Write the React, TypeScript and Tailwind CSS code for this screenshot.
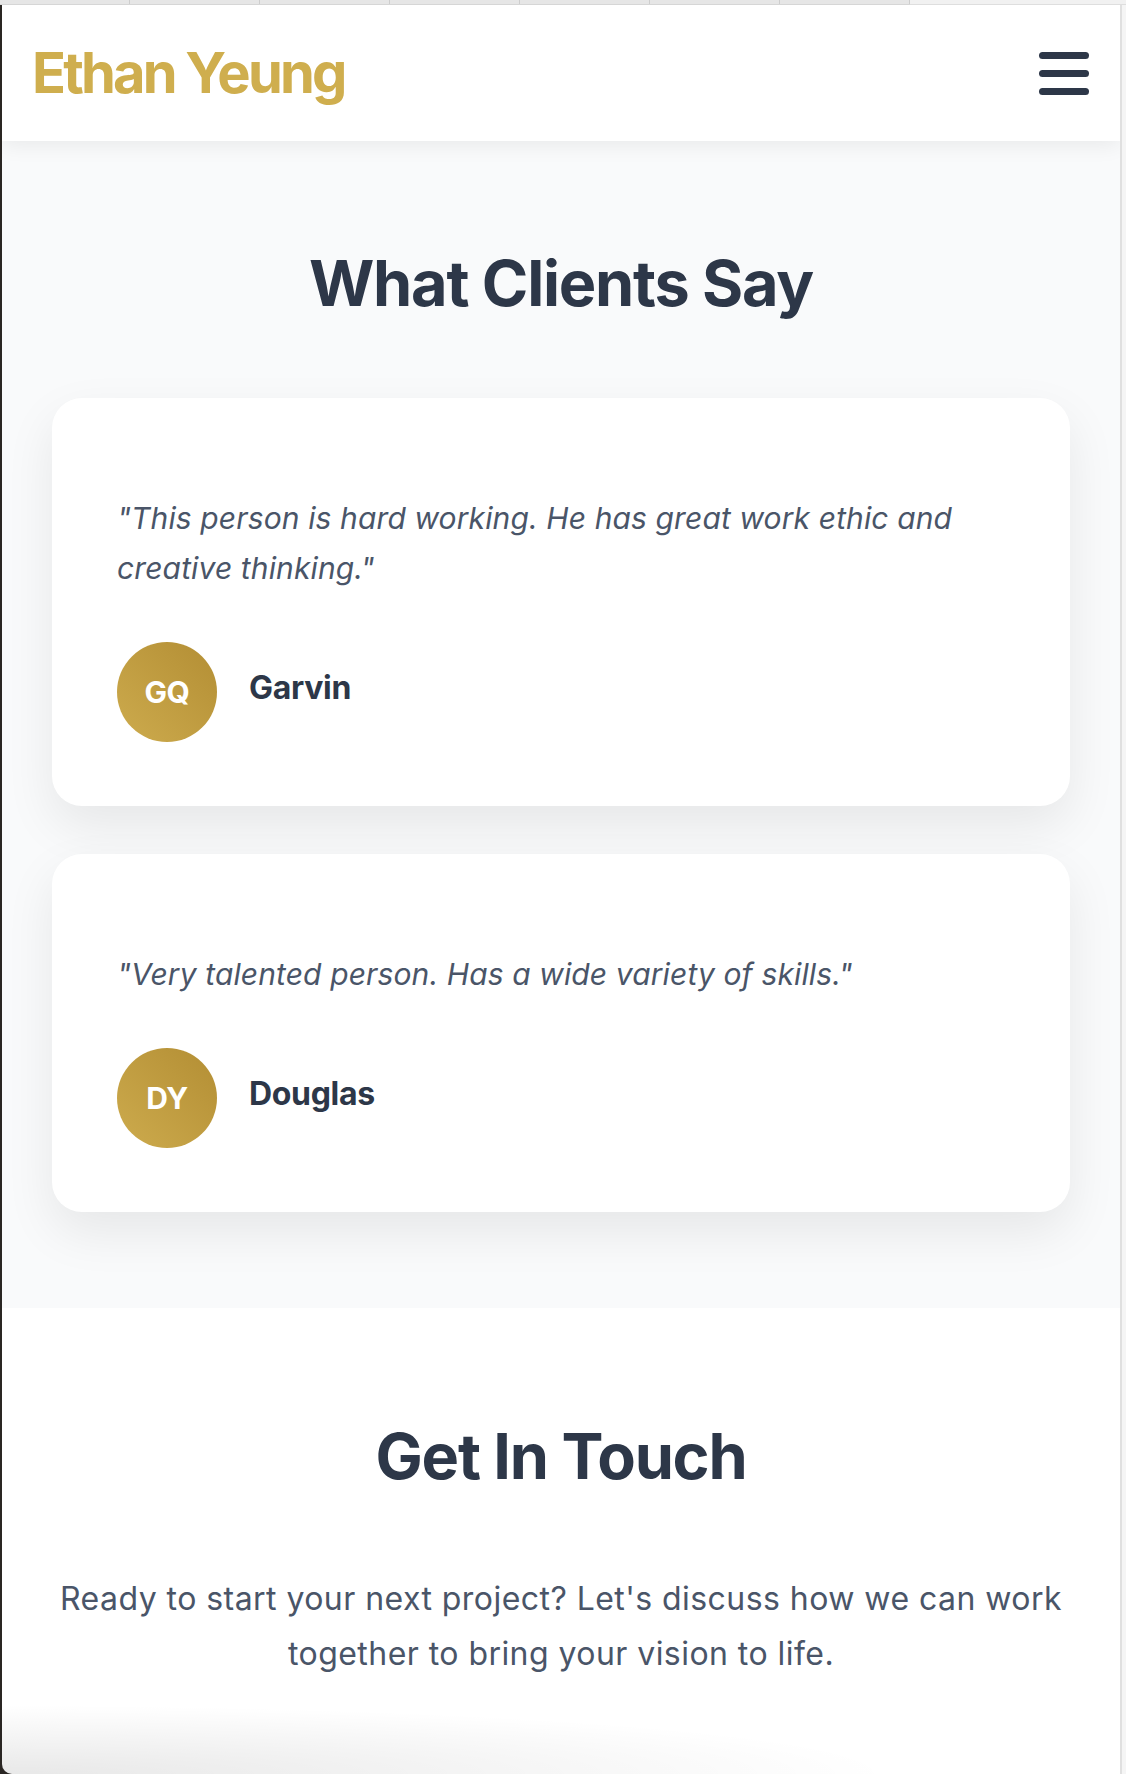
const testimonials = [
  {
    quote: "\"This person is hard working. He has great work ethic and creative thinking.\"",
    initials: "GQ",
    name: "Garvin",
  },
  {
    quote: "\"Very talented person. Has a wide variety of skills.\"",
    initials: "DY",
    name: "Douglas",
  },
];

// tab separators of the browser strip across the top
const tabStops = [130, 130, 130, 130, 130, 130, 130];

function TabStrip() {
  return (
    <div className="flex h-[5px] shrink-0">
      <div className="flex h-full border-b border-[#d6d6d6] bg-[#e6e6e6]">
        {tabStops.map((w, i) => (
          <div key={i} className="h-full border-r border-[#cdcdcd]" style={{ width: w }} />
        ))}
      </div>
      <div className="h-full flex-1 border-b border-[#dedede] bg-[#f1f1f1]" />
    </div>
  );
}

function Header() {
  return (
    <header className="relative z-10 flex h-[136px] shrink-0 items-center justify-between bg-white px-[30px] shadow-[0_4px_20px_rgba(0,0,0,0.07)]">
      <span className="text-[56px] font-bold leading-none tracking-[-0.05em] text-[#cfae4e]">
        Ethan Yeung
      </span>
      <button className="mr-[1px] flex w-[50px] flex-col gap-[11px]">
        <span className="h-[7px] rounded-full bg-[#2d3748]" />
        <span className="h-[7px] rounded-full bg-[#2d3748]" />
        <span className="h-[7px] rounded-full bg-[#2d3748]" />
      </button>
    </header>
  );
}

function TestimonialCard({ quote, initials, name }: { quote: string; initials: string; name: string }) {
  return (
    <div className="rounded-[30px] bg-white px-[65px] pt-[95px] pb-[64px] shadow-[0_20px_50px_rgba(0,0,0,0.08)]">
      <p className="text-[30px] italic leading-[50px] tracking-[0.004em] text-[#4a5568]">{quote}</p>
      <div className="mt-[49px] flex items-center gap-[32px]">
        <div className="flex h-[100px] w-[100px] items-center justify-center rounded-full bg-linear-to-bl from-[#b38e34] to-[#cdab4d]">
          <span className="text-[30px] font-bold tracking-[-0.01em] text-white">{initials}</span>
        </div>
        <span className="pb-2 text-[32px] font-bold tracking-[-0.01em] text-[#2d3748]">{name}</span>
      </div>
    </div>
  );
}

export default function App() {
  return (
    <div className="flex h-[1774px] w-[1126px] flex-col overflow-hidden bg-[#2a2623] font-['Inter',sans-serif]">
      <TabStrip />
      <div className="flex min-h-0 flex-1">
        <div className="w-[2px] shrink-0" />
        <div className="relative flex w-[1118px] flex-col overflow-hidden rounded-bl-[10px] bg-white">
          <Header />
          <section className="bg-[#f9fafb] px-[50px] pt-[104px] pb-[96px]">
            <h2 className="text-center text-[63px] font-bold leading-[76px] tracking-[-0.02em] text-[#2d3748]">
              What Clients Say
            </h2>
            <div className="mt-[77px] flex flex-col gap-[48px]">
              {testimonials.map((t) => (
                <TestimonialCard key={t.name} {...t} />
              ))}
            </div>
          </section>
          <section className="bg-white px-[50px] pt-[110px] text-center">
            <h2 className="text-[63px] font-bold leading-[76px] tracking-[-0.02em] text-[#2d3748]">Get In Touch</h2>
            <p className="mt-[77px] text-[32px] leading-[55px] tracking-[0.014em] text-[#4a5568]">
              Ready to start your next project? Let's discuss how we can work together to bring your vision to life.
            </p>
          </section>
          <div className="pointer-events-none absolute bottom-0 left-0 h-[70px] w-[900px] bg-[radial-gradient(ellipse_at_bottom_left,rgba(0,0,0,0.09),transparent_70%)]" />
        </div>
        <div className="w-[6px] shrink-0 border-l-2 border-[#e0e0e0] bg-[#f5f5f5]" />
      </div>
    </div>
  );
}
